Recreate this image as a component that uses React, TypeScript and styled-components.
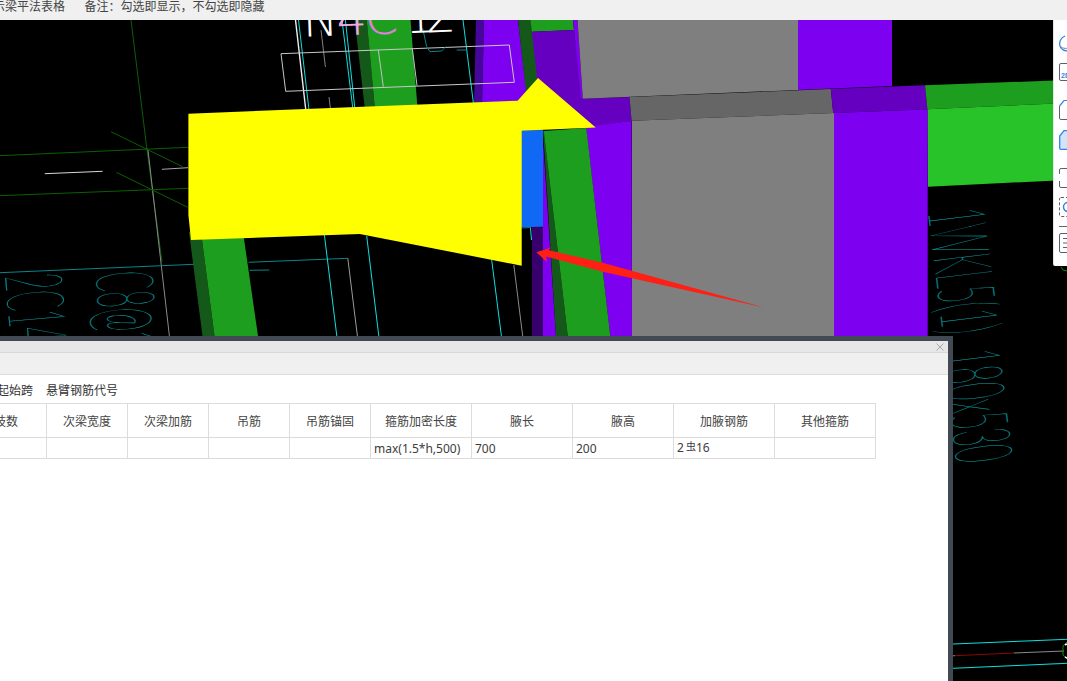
import React from 'react';
import styled, { createGlobalStyle } from 'styled-components';

const GlobalStyle = createGlobalStyle`
  html, body, #root {
    margin: 0;
    padding: 0;
    height: 100%;
  }
  body {
    overflow: hidden;
    background: #000;
    font-family: "Noto Sans", "Noto Sans CJK SC", sans-serif;
    font-size: 12px;
    color: #444;
  }
`;

const Page = styled.div`
  display: flex;
  flex-direction: column;
  height: 100vh;
  overflow: hidden;
`;

const TopBar = styled.div`
  flex: 0 0 20px;
  display: flex;
  gap: 19.5px;
  margin-left: -7px;
  background: #f0f0f0;
  line-height: 12px;
  white-space: nowrap;
  overflow: hidden;
  font-family: "Noto Sans CJK SC", sans-serif;
`;

const Workspace = styled.div`
  position: relative;
  flex: 1;
  min-height: 0;
`;

const CadCanvas = styled.svg`
  display: block;
  width: 100%;
  height: 100%;
  background: #000;
`;

const Face = styled.polygon<{ $fill: string }>`
  fill: ${(p) => p.$fill};
`;

const Wire = styled.polyline<{ $stroke: string; $w?: number }>`
  fill: none;
  stroke: ${(p) => p.$stroke};
  stroke-width: ${(p) => p.$w ?? 1};
`;

const CadNote = styled.text`
  font-family: "DejaVu Sans", sans-serif;
  font-weight: 200;
  font-size: 48px;
  fill: #fff;
  stroke: currentColor;
  stroke-width: 0;
`;

const CadLabel = styled.text`
  font-family: Lato, sans-serif;
  font-weight: 100;
  font-size: 80px;
  fill: #0a8589;
  stroke: #0a8589;
  stroke-width: 0.25px;
  vector-effect: non-scaling-stroke;
`;

const ToolPanel = styled.div`
  position: absolute;
  top: 0;
  right: 0;
  width: 13px;
  height: 246px;
  display: flex;
  flex-direction: column;
  align-items: flex-start;
  padding-left: 5px;
  box-sizing: border-box;
  background: #fff;
  border-bottom-left-radius: 2px;
  box-shadow: -1px 0 0 #e4e4e4;
  overflow: hidden;
`;

const ToolIcon = styled.svg<{ $top: number }>`
  flex: none;
  margin-top: ${(p) => p.$top}px;
  overflow: visible;
`;

const ToolRule = styled.div`
  flex: none;
  width: 12px;
  height: 1px;
  margin-top: 9px;
  background: #666;
`;

const BeamDialog = styled.div`
  position: absolute;
  left: -35px;
  top: 316px;
  bottom: 0;
  width: 988px;
  box-sizing: border-box;
  display: flex;
  flex-direction: column;
  background: #fff;
  border-top: 5px solid #414a52;
  border-right: 5px solid #414a52;
`;

const TitleBar = styled.div`
  flex: 0 0 12px;
  box-sizing: border-box;
  display: flex;
  justify-content: flex-end;
  align-items: center;
  padding-right: 4px;
  background: #e8e7e8;
  border-bottom: 1px solid #d8d8d8;
`;

const DialogTools = styled.div`
  flex: 0 0 22px;
  box-sizing: border-box;
  background: #f0f0f0;
  border-bottom: 1px solid #dcdcdc;
`;

const OptionRow = styled.div`
  flex: 0 0 28px;
  display: flex;
  align-items: center;
  gap: 13px;
  padding-left: 32px;
  font-family: "Noto Sans CJK SC", sans-serif;
  color: #333;
`;

const BeamTable = styled.table`
  table-layout: fixed;
  width: 910px;
  border-collapse: collapse;
  font-family: "Noto Sans", "Noto Sans CJK SC", sans-serif;
  font-size: 12px;
`;

const HeadRow = styled.tr`
  height: 34px;
`;

const BodyRow = styled.tr`
  height: 21px;
`;

const HeadCell = styled.th`
  padding: 1px 0 0;
  border: 1px solid #dcdcdc;
  font-weight: 400;
  line-height: 16px;
  text-align: center;
  color: #444;
  font-family: "Noto Sans CJK SC", sans-serif;
`;

const BodyCell = styled.td<{ $raised?: boolean }>`
  padding: ${(p) => (p.$raised ? '0 0 1px 3px' : '1px 0 0 3px')};
  border: 1px solid #dcdcdc;
  line-height: 16px;
  color: #3c3c3c;
  white-space: nowrap;
`;

const BarGrade = styled.span`
  font-family: "Noto Sans CJK SC", sans-serif;
  font-size: 10px;
  position: relative;
  top: -2px;
  margin: 0 0 0 2px;
`;

const faces: [string, string][] = [
  // upper left beam stack
  ['476,20 484,20 482,104 474,104', '#45069a'],
  ['484,20 518,20 525,80 531,104 482,104', '#7d00f0'],
  ['518,20 532,20 538,80 540,110 528,110', '#14591a'],
  ['530.5,20 573,20 574,30 532,31.7', '#1e9e1e'],
  ['532,31.7 574,30 582.8,98.7 629.5,97 631.6,120.7 586,128 540,128 537,78', '#6600c0'],
  ['573,20 577.5,20 582.8,98.7 581,98', '#7d00f0'],
  ['577.5,20 798,20 798,90 582.8,98.7', '#7f7f7f'],
  ['798,20 892,20 892,86 798,90', '#7d00f0'],
  // roof band
  ['629.5,97 830.8,89 833.2,113 631.6,120.7', '#666666'],
  ['830.8,89 925,85.3 927.4,109.3 833.2,113', '#6600c0'],
  ['925,85.3 1067,80 1067,103 927.4,109.3', '#1e9e1e'],
  ['927.4,109.3 1067,103 1067,180 928,186.7', '#28c328'],
  // lower columns
  ['586,127 631.6,120.7 632,336 610.3,336', '#7d00f0'],
  ['632,120.7 834,113 834,336 632,336', '#7f7f7f'],
  ['834,113 927.7,109.3 927.7,336 834,336', '#7d00f0'],
  ['543,140 556,336 543,336', '#7d00f0'],
  ['543,130 543.7,131 567.8,336 556,336', '#14591a'],
  ['543.7,131 586.3,128 610.3,336 567.8,336', '#1e9e1e'],
  ['531.9,227 543,227 543,336 531.9,336', '#38006c'],
  ['505,130.7 543,130 543,226.7 505,227.5', '#0f69f5'],
  // left beams
  ['189,232 201,232 214.5,336 202.5,336', '#14591a'],
  ['201,232 243,232 258,336 214.5,336', '#1e9e1e'],
  ['354.7,20 366.7,20 375,110 365,110', '#14591a'],
  ['366.7,20 410.5,20 417.7,110 375,110', '#1e9e1e'],
];

const wires: [string, string, number?][] = [
  ['131,20 147,150 162,262', '#0a5f0a'],
  ['148,150 169.4,336', '#8a8a8a'],
  ['0,155.7 188,147.3', '#0a6000'],
  ['0,195.7 188,188.3', '#0a6000'],
  ['111,131.7 182.5,166.7', '#0a6000'],
  ['116.4,172.3 187.7,207.3', '#0a6000'],
  ['44.8,173.7 102.6,171.3', '#d8d8d8'],
  ['161.9,169.3 188,167.7', '#a8a8a8'],
  ['0,272.7 193.9,264.3', '#0a8589'],
  ['248.6,262.3 347.8,258.3', '#0a8589'],
  ['249.6,270.3 269.3,270', '#0a8589'],
  ['347.8,258.3 357.4,336', '#9a9a9a'],
  ['324.4,235 336.8,336', '#10dede'],
  ['366.7,236 378.8,336', '#10dede'],
  ['491.7,260 501.4,336', '#10dede'],
  ['513.8,265 522.7,336', '#8a8a8a'],
  ['522,228 531,227.5', '#0a8589'],
  ['530.5,228 531.5,240', '#10dede'],
  ['295.5,20 305.8,110', '#eeeeee', 1.4],
  ['298.5,20 309,110', '#10dede'],
  ['342,20 353,110', '#10dede'],
  ['345.4,20 355,110', '#10dede'],
  ['463,20 473.5,104', '#10dede'],
  ['321,30 325.4,67', '#808080'],
  ['329,97 330.6,110', '#808080'],
  ['281,53.7 509.3,45 514.3,82.3 285.7,91.3 281,53.7', '#c8c8c8'],
  ['378.3,50 383.3,86.7', '#c0c0c0'],
  ['412.3,48.3 417,85.7', '#c0c0c0'],
  ['422.7,28.3 426.7,46.7 430,51.7 441.7,51 445.7,46.7', '#0a8589'],
  ['456.7,50 466.7,50', '#0a8589'],
  ['953,644 1067,639.3', '#10dede'],
  ['953,668.3 1067,663.3', '#10dede'],
  ['953,655.8 955,655.7', '#8a8a8a'],
  ['955,655.7 1014,653', '#8f0505'],
  ['1014,653 1064,651', '#8a8a8a'],
  ['1067,642 1063,646 1063,655 1067,659', '#0a8a0a'],
  ['1065,645 1067,644', '#ffffff', 1.5],
  ['1065,657 1067,658', '#ffffff', 1.5],
  ['1061,267 1063,270 1067,271', '#0a8a0a'],
];

const columns = [
  { title: '肢数', width: 81 },
  { title: '次梁宽度', width: 81 },
  { title: '次梁加筋', width: 81 },
  { title: '吊筋', width: 81 },
  { title: '吊筋锚固', width: 81 },
  { title: '箍筋加密长度', width: 101 },
  { title: '腋长', width: 101 },
  { title: '腋高', width: 101 },
  { title: '加腋钢筋', width: 101 },
  { title: '其他箍筋', width: 101 },
];

const CadView: React.FC = () => (
  <CadCanvas viewBox="0 20 1067 661" preserveAspectRatio="none">
    {faces.map(([points, fill]) => (
      <Face key={points} points={points} $fill={fill} />
    ))}
    {wires.map(([points, stroke, w]) => (
      <Wire key={points} points={points} $stroke={stroke} $w={w} />
    ))}

    <CadNote transform="rotate(-2 380 33)">
      <tspan x="303" y="34">N</tspan>
      <tspan x="337" y="34" fill="#f0a8e8">4</tspan>
      <tspan x="365" y="34" fill="#e27fe2">C</tspan>
      <tspan x="405" y="34">1</tspan>
      <tspan x="426" y="34">2</tspan>
    </CadNote>

    <CadLabel transform="translate(5 276) rotate(85) scale(0.36 1)">2C14</CadLabel>
    <CadLabel transform="translate(96 273) rotate(86) scale(0.36 1)">C8@1</CadLabel>
    <CadLabel transform="translate(928 212) rotate(83) scale(0.36 1)">1WKL5(1)</CadLabel>
    <CadLabel transform="translate(943 353) rotate(83) scale(0.36 1)">180x530</CadLabel>

    {/* big yellow arrow annotation */}
    <Face
      points="188.4,113.7 517.6,100.7 538,78 595.7,127.5 521.7,130.7 521.7,265.7 359.8,234 191,240 188.4,215"
      $fill="#ffff00"
    />
    {/* red arrow */}
    <Face
      points="536.4,252.3 552,247.3 548,250 603.7,263 766,308 603.7,272 546,256.5 547,262"
      $fill="#fe2015"
    />
  </CadCanvas>
);

const ToolStrip: React.FC = () => (
  <ToolPanel>
    <ToolIcon $top={15} width="20" height="18" viewBox="0 0 20 18">
      <path d="M6 1C2 3 0 7 1 11c1 3 4 5 8 5" fill="none" stroke="#2f86e8" strokeWidth="1.3" />
      <path d="M1 11c3 3 7 3 11 1" fill="none" stroke="#7a8290" />
    </ToolIcon>
    <ToolIcon $top={10} width="20" height="18" viewBox="0 0 20 18">
      <rect x="0.5" y="0.5" width="22" height="17" rx="1.5" fill="none" stroke="#5a6070" />
      <text x="2" y="15" fontSize="7" fontWeight="700" fontFamily="Liberation Sans" fill="#2f86e8">2D</text>
    </ToolIcon>
    <ToolIcon $top={19} width="20" height="20" viewBox="0 0 20 20">
      <path d="M0.5 6V18a1.5 1.5 0 0 0 1.5 1.5H20" fill="none" stroke="#5a6070" />
      <path d="M0.5 6L5 0.5H20" fill="none" stroke="#2f86e8" strokeWidth="1.2" />
    </ToolIcon>
    <ToolIcon $top={10} width="20" height="20" viewBox="0 0 20 20">
      <path d="M0.7 6L5 0.7H20V19.3H2a1.3 1.3 0 0 1-1.3-1.3z" fill="#d2e4fb" stroke="#2f86e8" strokeWidth="1.3" />
    </ToolIcon>
    <ToolIcon $top={18} width="20" height="20" viewBox="0 0 20 20">
      <path d="M20 0.5H2A1.5 1.5 0 0 0 0.5 2V6M0.5 13V18A1.5 1.5 0 0 0 2 19.5H20" fill="none" stroke="#5a6070" />
    </ToolIcon>
    <ToolIcon $top={9} width="20" height="20" viewBox="0 0 20 20">
      <rect x="0.5" y="0.5" width="22" height="19" rx="1.5" fill="none" stroke="#5a6070" strokeDasharray="3 2" />
      <circle cx="9" cy="10" r="4.5" fill="none" stroke="#2f86e8" strokeWidth="1.5" />
    </ToolIcon>
    <ToolRule />
    <ToolIcon $top={6} width="20" height="20" viewBox="0 0 20 20">
      <rect x="0.5" y="0.5" width="22" height="19" rx="1.5" fill="none" stroke="#5a6070" />
      <path d="M4 5.5H9M4 10H9M4 14.5H9" stroke="#5a6070" />
    </ToolIcon>
  </ToolPanel>
);

export default function App() {
  return (
    <Page>
      <GlobalStyle />
      <TopBar>
        <span>示梁平法表格</span>
        <span>备注：勾选即显示，不勾选即隐藏</span>
      </TopBar>
      <Workspace>
        <CadView />
        <ToolStrip />
        <BeamDialog>
          <TitleBar>
            <svg width="8" height="8" viewBox="0 0 8 8">
              <path d="M0.5 0.5L7.5 7.5M7.5 0.5L0.5 7.5" stroke="#a8a8a8" />
            </svg>
          </TitleBar>
          <DialogTools />
          <OptionRow>
            <span>起始跨</span>
            <span>悬臂钢筋代号</span>
          </OptionRow>
          <BeamTable>
            <colgroup>
              {columns.map((c) => (
                <col key={c.title} width={c.width} />
              ))}
            </colgroup>
            <thead>
              <HeadRow>
                {columns.map((c) => (
                  <HeadCell key={c.title}>{c.title}</HeadCell>
                ))}
              </HeadRow>
            </thead>
            <tbody>
              <BodyRow>
                <BodyCell />
                <BodyCell />
                <BodyCell />
                <BodyCell />
                <BodyCell />
                <BodyCell>max(1.5*h,500)</BodyCell>
                <BodyCell>700</BodyCell>
                <BodyCell>200</BodyCell>
                <BodyCell $raised>
                  2<BarGrade>虫</BarGrade>16
                </BodyCell>
                <BodyCell />
              </BodyRow>
            </tbody>
          </BeamTable>
        </BeamDialog>
      </Workspace>
    </Page>
  );
}
